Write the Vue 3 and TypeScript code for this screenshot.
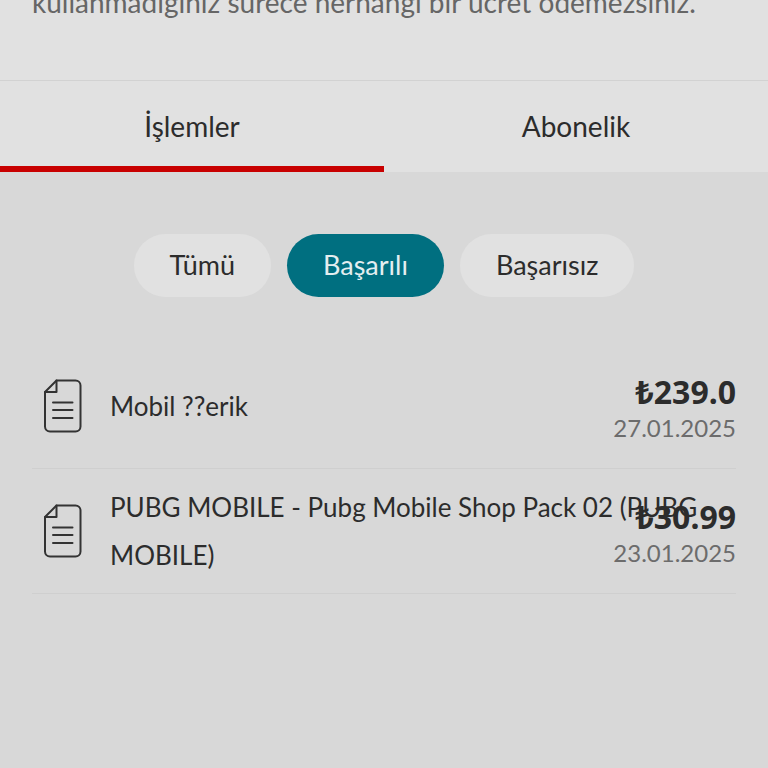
<script setup lang="ts">
import { computed, ref } from 'vue'

type Status = 'success' | 'failed'
type Filter = 'all' | Status

interface Transaction {
  id: number
  title: string
  amount: string
  date: string
  status: Status
}

const tabs = ['İşlemler', 'Abonelik']
const activeTab = ref(0)

const filters: { key: Filter; label: string }[] = [
  { key: 'all', label: 'Tümü' },
  { key: 'success', label: 'Başarılı' },
  { key: 'failed', label: 'Başarısız' },
]
const activeFilter = ref<Filter>('success')

const transactions: Transaction[] = [
  { id: 1, title: 'Mobil ??erik', amount: '₺239.0', date: '27.01.2025', status: 'success' },
  {
    id: 2,
    title: 'PUBG MOBILE - Pubg Mobile Shop Pack 02 (PUBG MOBILE)',
    amount: '₺30.99',
    date: '23.01.2025',
    status: 'success',
  },
]

const visible = computed(() =>
  transactions.filter((t) => activeFilter.value === 'all' || t.status === activeFilter.value),
)
</script>

<template>
  <main class="page">
    <header class="intro">
      <p class="intro-text">kullanmadığınız sürece herhangi bir ücret ödemezsiniz.</p>
    </header>

    <nav class="tabs" role="tablist">
      <button
        v-for="(tab, i) in tabs"
        :key="tab"
        type="button"
        role="tab"
        class="tab"
        :class="{ active: activeTab === i }"
        :aria-selected="activeTab === i"
        @click="activeTab = i"
      >
        {{ tab }}
      </button>
    </nav>

    <div class="filters">
      <button
        v-for="f in filters"
        :key="f.key"
        type="button"
        class="pill"
        :class="{ active: activeFilter === f.key }"
        :aria-pressed="activeFilter === f.key"
        @click="activeFilter = f.key"
      >
        {{ f.label }}
      </button>
    </div>

    <ul class="list">
      <li v-for="t in visible" :key="t.id" class="row">
        <svg class="icon" viewBox="0 0 38 54" aria-hidden="true">
          <path d="M12.5 1.5H31.500a5 5 0 0 1 5 5V47.500a5 5 0 0 1-5 5H6a5 5 0 0 1-5-5V13Z" />
          <path d="M12.500 1.500V13H1" />
          <path d="M9 23.500H28.500M9 31H28.500M9 39H28.500" />
        </svg>
        <span class="title">{{ t.title }}</span>
        <div class="meta">
          <strong class="amount">{{ t.amount }}</strong>
          <time class="date">{{ t.date }}</time>
        </div>
      </li>
    </ul>
  </main>
</template>

<style>
body {
  margin: 0;
  background: #d8d8d8;
}
</style>

<style scoped>
.page {
  min-height: 100vh;
  overflow: hidden;
  background: #d8d8d8;
  color: #2c2c2c;
  font-family: Lato, 'Noto Sans', sans-serif;
}

.intro {
  padding: 0 32px 58px;
  border-bottom: 1px solid #d2d2d2;
  background: #e1e1e1;
}

.intro-text {
  margin: -18px 0 0;
  color: #666;
  font-size: 28px;
  line-height: 40px;
}

.tabs {
  display: grid;
  grid-template-columns: 1fr 1fr;
  background: #e1e1e1;
}

.tab {
  padding: 25px 16px 20px;
  border: 0;
  border-bottom: 6px solid transparent;
  background: none;
  color: inherit;
  font-family: inherit;
  font-size: 28px;
  line-height: 40px;
  cursor: pointer;
}

.tab.active {
  border-bottom-color: #c80000;
}

.filters {
  display: flex;
  justify-content: center;
  gap: 16px;
  padding: 62px 32px 47px;
}

.pill {
  padding: 11px 36px 12px;
  border: 0;
  border-radius: 32px;
  background: #e1e1e1;
  color: inherit;
  font-family: inherit;
  font-size: 27px;
  line-height: 40px;
  cursor: pointer;
}

.pill.active {
  background: #006f80;
  color: #e4eef0;
}

.list {
  margin: 0;
  padding: 0 32px;
  list-style: none;
}

.row {
  position: relative;
  display: flex;
  align-items: center;
  gap: 28px;
  min-height: 124px;
  padding-left: 12px;
  border-bottom: 1px solid #cfcfcf;
}

.icon {
  flex: none;
  width: 38px;
  height: 54px;
  fill: none;
  stroke: #333;
  stroke-width: 2;
  stroke-linecap: round;
  stroke-linejoin: round;
}

.title {
  font-size: 26px;
  line-height: 48px;
}

/* The amount floats over long titles at the row's right edge. */
.meta {
  position: absolute;
  inset: 0 0 0 auto;
  display: flex;
  flex-direction: column;
  align-items: flex-end;
  justify-content: center;
  padding-top: 8px;
}

.amount {
  font-family: 'Noto Sans', sans-serif;
  font-size: 32px;
  font-weight: 700;
  line-height: 36px;
}

.date {
  color: #6c6c6c;
  font-size: 24px;
  line-height: 36px;
}
</style>
